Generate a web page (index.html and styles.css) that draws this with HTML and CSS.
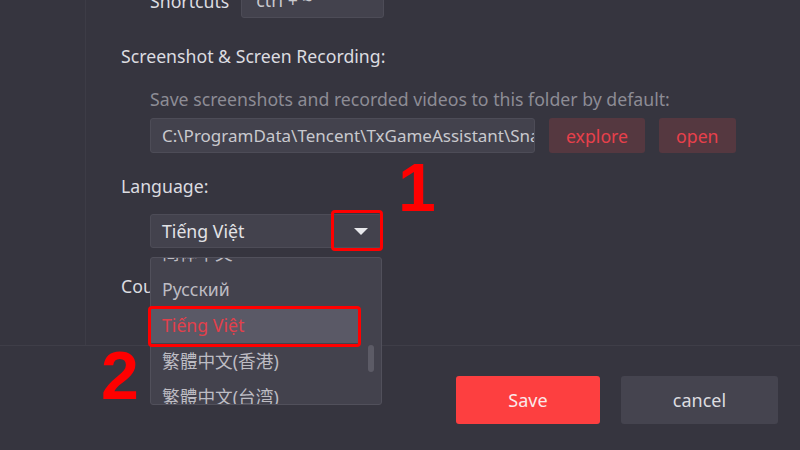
FILE: index.html
```html
<!DOCTYPE html>
<html lang="en">
<head>
    <meta charset="UTF-8">
    <title>Settings</title>
    <link rel="stylesheet" href="styles.css">
</head>
<body>
    <div class="window">
        <div class="main">
            <div class="sidebar"></div>
            <div class="content">
                <!-- shortcuts (scrolled out of view) -->
                <div class="row shortcut-row">
                    <span class="row-label">Shortcuts</span>
                    <div class="input short">ctrl + ~</div>
                </div>

                <div class="section-title">Screenshot &amp; Screen Recording:</div>
                <div class="sub">
                    <div class="hint">Save screenshots and recorded videos to this folder by default:</div>
                    <div class="row">
                        <div class="input path">C:\ProgramData\Tencent\TxGameAssistant\Snapshot</div>
                        <button class="btn-soft">explore</button>
                        <button class="btn-soft">open</button>
                    </div>
                </div>

                <div class="section-title lang-title">Language:</div>
                <div class="sub">
                    <div class="select">
                        <span>Tiếng Việt</span>
                        <span class="arrow"></span>
                        <div class="mark mark-1"></div>
                        <div class="num num-1">1</div>
                    </div>
                </div>

                <div class="section-title">Country/Region:</div>

                <!-- open dropdown -->
                <div class="dropdown">
                    <div class="options">
                        <div class="option">简体中文</div>
                        <div class="option">Русский</div>
                        <div class="option selected">Tiếng Việt</div>
                        <div class="option">繁體中文(香港)</div>
                        <div class="option">繁體中文(台湾)</div>
                    </div>
                    <div class="scrollbar"><div class="thumb"></div></div>
                    <div class="mark mark-2"></div>
                </div>
            </div>
        </div>
        <div class="footer">
            <div class="num num-2">2</div>
            <button class="btn btn-save">Save</button>
            <button class="btn btn-cancel">cancel</button>
        </div>
    </div>
</body>
</html>
```

FILE: styles.css
```css
body {
    margin: 0;
    background-color: #36353f;
    font-family: "Noto Sans", "Noto Sans CJK SC", sans-serif;
    color: #dcdce0;
    overflow: hidden;
}

.window {
    width: 800px;
    height: 450px;
    display: flex;
    flex-direction: column;
    position: relative;
    overflow: hidden;
}

.main {
    height: 345px;
    flex-shrink: 0;
    display: flex;
    border-bottom: 1px solid #3f3e48;
    position: relative;
    z-index: 2;
}

.sidebar {
    width: 85px;
    border-right: 1px solid #3d3c46;
    flex-shrink: 0;
}

.content {
    flex: 1;
    padding-left: 35px;
    position: relative;
}

.row {
    display: flex;
    align-items: center;
    gap: 14px;
}

.shortcut-row {
    margin-top: -17px;
    margin-left: 29px;
    gap: 12px;
}

.row-label {
    font-size: 17.7px;
}

.section-title {
    font-size: 17.7px;
    line-height: 24px;
    margin-top: 26px;
}

.lang-title {
    margin-top: 21px;
}

.sub {
    padding-left: 29px;
}

.hint {
    font-size: 17.7px;
    line-height: 24px;
    color: #8d8c95;
    margin-top: 19px;
    margin-bottom: 7px;
}

.input {
    height: 33px;
    box-sizing: border-box;
    background-color: #43424d;
    border: 1px solid #4d4c57;
    border-radius: 3px;
    color: #c9c9ce;
    font-size: 17.7px;
    line-height: 31px;
    padding: 0 11px;
    white-space: nowrap;
    overflow: hidden;
}

.input.short {
    width: 143px;
    height: 35px;
    line-height: 33px;
    padding: 0 14px;
}

.input.path {
    width: 385px;
    height: 35px;
    line-height: 33px;
    font-size: 17px;
}

.btn-soft {
    height: 35px;
    background-color: #553840;
    border: none;
    border-radius: 3px;
    color: #e8404b;
    font-family: inherit;
    font-size: 17.7px;
    padding: 0 17px;
}

.select {
    margin-top: 16px;
    width: 232px;
    height: 34px;
    box-sizing: border-box;
    background-color: #43424d;
    border: 1px solid #4d4c57;
    border-radius: 3px;
    display: flex;
    align-items: center;
    justify-content: space-between;
    padding: 0 13px 0 11px;
    font-size: 17.7px;
    color: #e2e2e6;
    position: relative;
}

.arrow {
    width: 0;
    height: 0;
    border-left: 7px solid transparent;
    border-right: 7px solid transparent;
    border-top: 7px solid #e8e8ec;
}

.dropdown {
    position: absolute;
    left: 64px;
    top: 257px;
    width: 232px;
    height: 148px;
    box-sizing: border-box;
    background-color: #43424d;
    border: 1px solid #51505b;
    border-radius: 3px;
    display: flex;
    z-index: 2;
}

.options {
    width: 208px;
    overflow: hidden;
    border-radius: 3px 0 0 3px;
}

.option {
    height: 36px;
    line-height: 36px;
    padding-left: 11px;
    font-size: 17.7px;
    color: #bdbcc3;
    white-space: nowrap;
}

.option:first-child {
    margin-top: -23px;
}

.option.selected {
    background-color: #5a5966;
    color: #e2404b;
}

.scrollbar {
    flex: 1;
    position: relative;
}

.thumb {
    position: absolute;
    left: 9px;
    top: 87px;
    width: 6px;
    height: 27px;
    border-radius: 3px;
    background-color: #5c5b66;
}

/* red annotations */
.mark {
    position: absolute;
    border: 3px solid #ff0000;
    border-radius: 4px;
    box-sizing: border-box;
}

.mark-1 {
    right: -2px;
    top: -5px;
    width: 52px;
    height: 41px;
}

.mark-2 {
    left: -3px;
    top: 48px;
    width: 213px;
    height: 41px;
}

.num {
    position: absolute;
    color: #ff0000;
    font-family: "Liberation Sans", Arial, sans-serif;
    font-weight: bold;
    font-size: 68px;
    line-height: 1;
}

.num-1 {
    left: 247px;
    top: -62px;
}

.num-2 {
    left: 101px;
    top: 341px;
}

.footer {
    flex: 1;
    display: flex;
    justify-content: flex-end;
    align-items: flex-start;
    padding: 30px 22px 0 0;
    gap: 21px;
}

.btn {
    height: 48px;
    border: none;
    border-radius: 3px;
    font-family: inherit;
    font-size: 18px;
}

.btn-save {
    width: 144px;
    background-color: #fd3f40;
    color: #fbe9ea;
}

.btn-cancel {
    width: 157px;
    background-color: #45444f;
    color: #dddde1;
}
```
